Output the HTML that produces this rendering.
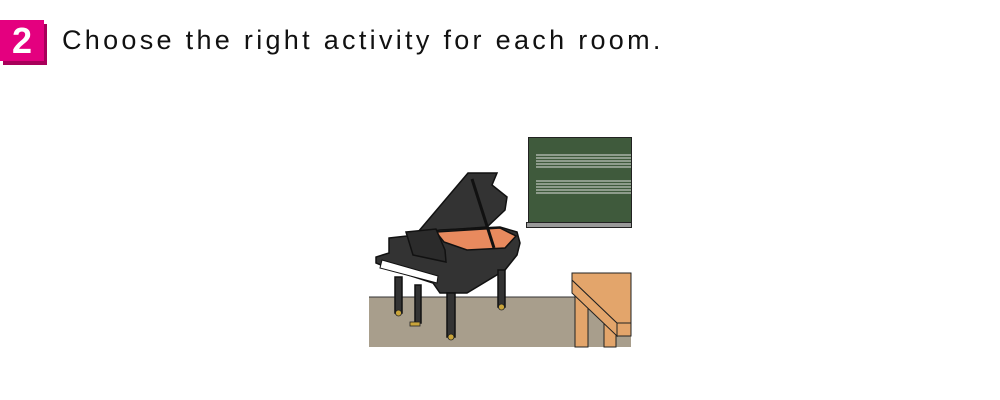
<!DOCTYPE html>
<html><head><meta charset="utf-8"><style>
html,body{margin:0;padding:0;background:#fff;width:1000px;height:400px;overflow:hidden;position:relative}
.badge{position:absolute;left:0;top:20px;width:44px;height:41px;background:#e4007f;box-shadow:3px 4px 0 #a8005a;color:#fff;font:bold 36px "Liberation Sans",sans-serif;text-align:center;line-height:41px}
.t{position:absolute;left:62px;top:25px;font:27px "Liberation Sans",sans-serif;letter-spacing:3.3px;color:#111;white-space:nowrap}
svg{position:absolute;left:0;top:0}
</style></head><body>
<div class="badge">2</div>
<div class="t">Choose the right activity for each room.</div>
<svg width="1000" height="400" viewBox="0 0 1000 400">
<rect x="369" y="297" width="262" height="50" fill="#a89e8c"/>
<line x1="369" y1="297" x2="631" y2="297" stroke="#333" stroke-width="1"/>
<rect x="528.5" y="137.5" width="103" height="85" fill="#3f5a3c" stroke="#222" stroke-width="1"/>
<g stroke="#ddd" stroke-width="1">
<line x1="536" y1="155" x2="631" y2="155"/><line x1="536" y1="158" x2="631" y2="158"/><line x1="536" y1="161" x2="631" y2="161"/><line x1="536" y1="164" x2="631" y2="164"/><line x1="536" y1="167" x2="631" y2="167"/>
<line x1="536" y1="181" x2="631" y2="181"/><line x1="536" y1="184" x2="631" y2="184"/><line x1="536" y1="187" x2="631" y2="187"/><line x1="536" y1="190" x2="631" y2="190"/><line x1="536" y1="193" x2="631" y2="193"/>
</g>
<rect x="526.5" y="222.5" width="105" height="5" fill="#999" stroke="#222"/>
<g stroke="#222" stroke-width="1" fill="#e3a56b">
<polygon points="575,290 588,303 588,347 575,347"/>
<polygon points="604,318 616,330 616,347 604,347"/>
<polygon points="572,280 617,323 617,336 572,293"/>
<polygon points="572,273 631,273 631,323 617,323 572,280"/>
<rect x="617" y="323" width="14" height="13"/>
</g>
<g stroke="#111" stroke-width="1.5" fill="#333">
<polygon points="418,232 468,173 497,173 492,185 507,197 505,210 487,227"/>
<polygon points="389,238 407,236 440,230 500,227 517,232 520,243 517,255 505,270 467,293 440,293 433,283 393,270 376,263 376,257 389,253"/>
<polygon points="436,232 500,228 516,236 505,248 467,250 444,242" fill="#e88a5e"/>
<polygon points="406,232 436,229 445,250 446,262 413,255" fill="#2b2b2b"/>
<polygon points="382,260 438,276 437,283 380,268" fill="#fff" stroke-width="1"/>
<rect x="395" y="277" width="7" height="36"/>
<rect x="447" y="293" width="8" height="44"/>
<rect x="498" y="270" width="7" height="37"/>
<rect x="415" y="285" width="6" height="38"/>
</g>
<line x1="472" y1="179" x2="494" y2="248" stroke="#111" stroke-width="3"/>
<g fill="#c9a43a" stroke="#222" stroke-width="0.8">
<circle cx="398.5" cy="313" r="3"/><circle cx="451" cy="337" r="3"/><circle cx="501.5" cy="307" r="3"/>
<rect x="410" y="322" width="10" height="4"/>
</g>
</svg>
</body></html>
